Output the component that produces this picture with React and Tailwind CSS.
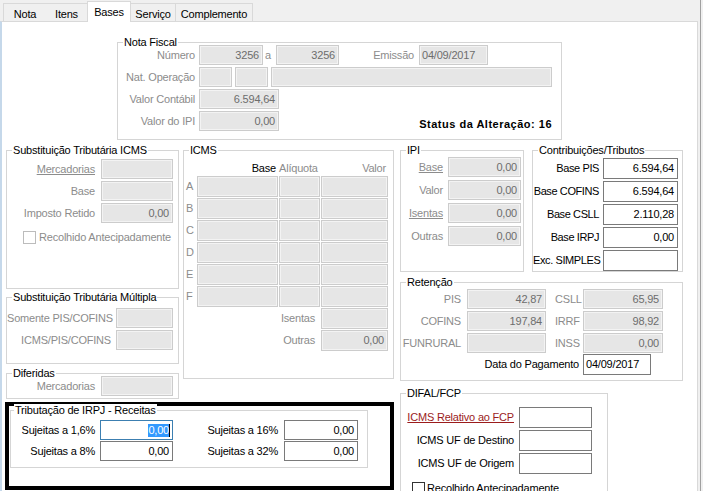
import React from "react";

const dis =
  "border border-[#cccccc] bg-[#e6e6e6] text-[#6d6d6d] shadow-[inset_0_0_0_1px_#f3f3f3]";
const en = "border border-[#7a7a7a] bg-white text-black";

function Field({ className = "", value = "", on = false, left = false }) {
  return (
    <div
      className={`${on ? en : dis} shrink-0 flex items-center whitespace-nowrap ${
        left ? "justify-start pl-[2px]" : "justify-end pr-[3px]"
      } ${className}`}
    >
      {value}
    </div>
  );
}

function Lbl({ className = "", children, dark = false, u = false }) {
  return (
    <span
      className={`shrink-0 whitespace-nowrap text-right ${
        dark ? "text-black" : "text-[#8c8c8c]"
      } ${u ? "underline" : ""} ${className}`}
    >
      {children}
    </span>
  );
}

function Group({ title, className = "", titleLeft = "left-[5px]", children }) {
  return (
    <div className={`relative shrink-0 border border-[#d5d5d5] ${className}`}>
      <span
        className={`absolute -top-[7px] ${titleLeft} bg-white px-px leading-[13px] text-black whitespace-nowrap`}
      >
        {title}
      </span>
      {children}
    </div>
  );
}

function Check({ dark = false }) {
  return (
    <span
      className={`w-[13px] h-[13px] shrink-0 bg-white border ${
        dark ? "border-[#333333]" : "border-[#bcbcbc]"
      }`}
    />
  );
}

const tabs = [
  { name: "Nota", w: "w-[43px] border-l" },
  { name: "Itens", w: "w-[41px]" },
  { name: "Bases", w: "w-[44px]", active: true },
  { name: "Serviço", w: "w-[45px] border-r" },
  { name: "Complemento", w: "w-[77px] border-r" },
];

export default function App() {
  return (
    <div className="w-[703px] h-[491px] overflow-hidden bg-white flex text-[11px] leading-[13px] tracking-[-0.2px] text-black font-['Liberation_Sans',Arial,sans-serif]">
      <div className="w-[698px] flex flex-col">
        {/* tabs */}
        <div className="h-[21px] shrink-0 bg-[#f0f0f0] flex items-end pl-[3px]">
          {tabs.map((t) =>
            t.active ? (
              <div
                key={t.name}
                className={`${t.w} relative top-px z-10 h-[21px] bg-white border-l border-r border-t border-[#d9d9d9] flex justify-center pt-[4px]`}
              >
                {t.name}
              </div>
            ) : (
              <div
                key={t.name}
                className={`${t.w} h-[18px] border-t border-[#d9d9d9] bg-[#f0f0f0] flex justify-center pt-[4px]`}
              >
                {t.name}
              </div>
            )
          )}
        </div>

        {/* panel */}
        <div className="flex-1 border-t border-t-[#d9d9d9] border-l-2 border-l-[#c5d8ea] border-r border-r-[#d9d9d9] flex flex-col">
          {/* Nota Fiscal */}
          <Group title="Nota Fiscal" className="mt-[20px] ml-[115px] w-[445px] h-[98px]">
            <div className="flex flex-col gap-[2px] pt-[2px]">
              <div className="flex items-center h-[20px]">
                <Lbl className="w-[81px] pr-[4px]">Número</Lbl>
                <Field className="w-[64px] h-full" value="3256" />
                <span className="w-[13px] pl-[2px] text-[#8c8c8c]">a</span>
                <Field className="w-[63px] h-full" value="3256" />
                <Lbl className="w-[80px] pr-[5px]">Emissão</Lbl>
                <Field className="w-[69px] h-full" value="04/09/2017" left />
              </div>
              <div className="flex items-center h-[20px]">
                <Lbl className="w-[81px] pr-[4px]">Nat. Operação</Lbl>
                <Field className="w-[33px] h-full" />
                <Field className="ml-[3px] w-[33px] h-full" />
                <Field className="ml-[3px] w-[281px] h-full" />
              </div>
              <div className="flex items-center h-[20px]">
                <Lbl className="w-[81px] pr-[4px]">Valor Contábil</Lbl>
                <Field className="w-[80px] h-full" value="6.594,64" />
              </div>
              <div className="flex items-end h-[20px]">
                <Lbl className="w-[81px] pr-[4px] self-center">Valor do IPI</Lbl>
                <Field className="w-[80px] h-full" value="0,00" />
                <span className="ml-auto mr-[9px] font-bold leading-[14px] tracking-[0.5px]">
                  Status da Alteração: 16
                </span>
              </div>
            </div>
          </Group>

          {/* body */}
          <div className="flex mt-[10px] ml-[3px] items-start">
            {/* left + middle */}
            <div className="w-[389px] shrink-0 flex flex-col">
              <div className="flex items-start">
                {/* left column */}
                <div className="ml-[1px] w-[173px] flex flex-col">
                  <Group title="Substituição Tributária ICMS" className="w-[173px] h-[139px]">
                    <div className="flex flex-col gap-[2px] pt-[8px]">
                      <div className="flex items-center h-[20px]">
                        <Lbl className="w-[94px] pr-[6px]" u>
                          Mercadorias
                        </Lbl>
                        <Field className="w-[72px] h-full" />
                      </div>
                      <div className="flex items-center h-[20px]">
                        <Lbl className="w-[94px] pr-[6px]">Base</Lbl>
                        <Field className="w-[72px] h-full" />
                      </div>
                      <div className="flex items-center h-[20px]">
                        <Lbl className="w-[94px] pr-[6px]">Imposto Retido</Lbl>
                        <Field className="w-[72px] h-full" value="0,00" />
                      </div>
                      <div className="flex items-center mt-[6px] ml-[16px]">
                        <Check />
                        <span className="ml-[3px] text-[#8c8c8c] whitespace-nowrap">
                          Recolhido Antecipadamente
                        </span>
                      </div>
                    </div>
                  </Group>

                  <Group title="Substituição Tributária Múltipla" className="mt-[8px] w-[173px] h-[67px]">
                    <div className="flex flex-col gap-[2px] pt-[10px]">
                      <div className="flex items-center h-[20px]">
                        <Lbl className="w-[109px] pr-[5px]">Somente PIS/COFINS</Lbl>
                        <Field className="w-[57px] h-full" />
                      </div>
                      <div className="flex items-center h-[20px]">
                        <Lbl className="w-[109px] pr-[5px]">ICMS/PIS/COFINS</Lbl>
                        <Field className="w-[57px] h-full" />
                      </div>
                    </div>
                  </Group>

                  <Group title="Diferidas" className="mt-[9px] w-[173px] h-[26px]">
                    <div className="flex items-center h-[20px] mt-[2px]">
                      <Lbl className="w-[94px] pr-[6px]">Mercadorias</Lbl>
                      <Field className="w-[72px] h-full" />
                    </div>
                  </Group>
                </div>

                {/* middle column */}
                <Group title="ICMS" className="ml-[4px] w-[211px] h-[229px]">
                  <div className="flex flex-col pt-[11px]">
                    <div className="flex h-[14px]">
                      <span className="w-[13px]" />
                      <span className="w-[81px] text-right pr-[2px]">Base</span>
                      <span className="ml-[1px] w-[41px] text-[#8c8c8c]">Alíquota</span>
                      <span className="ml-[1px] w-[67px] text-right pr-[2px] text-[#8c8c8c]">
                        Valor
                      </span>
                    </div>
                    <div className="flex flex-col gap-[1px]">
                      {["A", "B", "C", "D", "E", "F"].map((l) => (
                        <div key={l} className="flex items-center h-[21px]">
                          <span className="w-[13px] pl-[2px] text-[#8c8c8c]">{l}</span>
                          <Field className="w-[81px] h-full" />
                          <Field className="ml-[1px] w-[41px] h-full" />
                          <Field className="ml-[1px] w-[67px] h-full" />
                        </div>
                      ))}
                      <div className="flex items-center h-[21px]">
                        <Lbl className="w-[137px] pr-[6px]">Isentas</Lbl>
                        <Field className="w-[67px] h-full" />
                      </div>
                      <div className="flex items-center h-[21px]">
                        <Lbl className="w-[137px] pr-[6px]">Outras</Lbl>
                        <Field className="w-[67px] h-full" value="0,00" />
                      </div>
                    </div>
                  </div>
                </Group>
              </div>

              {/* IRPJ highlighted */}
              <div className="mt-[3px] w-[389px] h-[88px] border-4 border-black">
                <Group
                  title="Tributação de IRPJ - Receitas"
                  titleLeft="left-[3px]"
                  className="ml-[1px] mt-[4px] w-[358px] h-[58px]"
                >
                  <div className="flex flex-col gap-[1px] pt-[9px]">
                    <div className="flex items-center h-[20px]">
                      <Lbl className="w-[89px] pr-[5px]" dark>
                        Sujeitas a 1,6%
                      </Lbl>
                      <div className="w-[73px] h-full shrink-0 border border-[#3c7fb1] bg-white flex items-center justify-end pr-[2px]">
                        <span className="bg-[#3399ff] text-white">0,00</span>
                        <span className="w-px h-[13px] bg-black" />
                      </div>
                      <Lbl className="w-[111px] pr-[6px]" dark>
                        Sujeitas a 16%
                      </Lbl>
                      <Field className="w-[74px] h-full" value="0,00" on />
                    </div>
                    <div className="flex items-center h-[20px]">
                      <Lbl className="w-[89px] pr-[5px]" dark>
                        Sujeitas a 8%
                      </Lbl>
                      <Field className="w-[73px] h-full" value="0,00" on />
                      <Lbl className="w-[111px] pr-[6px]" dark>
                        Sujeitas a 32%
                      </Lbl>
                      <Field className="w-[74px] h-full" value="0,00" on />
                    </div>
                  </div>
                </Group>
              </div>
            </div>

            {/* right column */}
            <div className="ml-[6px] w-[283px] shrink-0 flex flex-col">
              <div className="flex items-start">
                <Group title="IPI" className="w-[124px] h-[122px]">
                  <div className="flex flex-col gap-[3px] pt-[6px]">
                    {[
                      ["Base", true],
                      ["Valor", false],
                      ["Isentas", true],
                      ["Outras", false],
                    ].map(([l, u]) => (
                      <div key={l} className="flex items-center h-[20px]">
                        <Lbl className="w-[47px] pr-[5px]" u={u}>
                          {l}
                        </Lbl>
                        <Field className="w-[73px] h-full" value="0,00" />
                      </div>
                    ))}
                  </div>
                </Group>
                <Group title="Contribuições/Tributos" className="ml-[8px] w-[151px] h-[122px]">
                  <div className="flex flex-col gap-[2px] pt-[7px]">
                    {[
                      ["Base PIS", "6.594,64"],
                      ["Base COFINS", "6.594,64"],
                      ["Base CSLL", "2.110,28"],
                      ["Base IRPJ", "0,00"],
                      ["Exc. SIMPLES", ""],
                    ].map(([l, v]) => (
                      <div key={l} className="flex items-center h-[21px]">
                        <Lbl className="w-[70px] pr-[4px] tracking-[-0.4px]" dark>
                          {l}
                        </Lbl>
                        <Field className="w-[75px] h-full" value={v} on />
                      </div>
                    ))}
                  </div>
                </Group>
              </div>

              <Group title="Retenção" className="mt-[10px] w-[283px] h-[99px]">
                <div className="flex flex-col pt-[6px]">
                  {[
                    ["PIS", "42,87", "CSLL", "65,95", ""],
                    ["COFINS", "197,84", "IRRF", "98,92", "mt-[2px]"],
                    ["FUNRURAL", "", "INSS", "0,00", "mt-[2px]"],
                  ].map(([a, av, b, bv, m]) => (
                    <div key={a} className={`flex items-center h-[20px] ${m}`}>
                      <Lbl className="w-[66px] pr-[6px]">{a}</Lbl>
                      <Field className="w-[79px] h-full" value={av} />
                      <Lbl className="w-[37px] pl-[9px] !text-left">{b}</Lbl>
                      <Field className="w-[80px] h-full" value={bv} />
                    </div>
                  ))}
                  <div className="flex items-center h-[21px] mt-[1px]">
                    <Lbl className="w-[182px] pr-[4px]" dark>
                      Data do Pagamento
                    </Lbl>
                    <Field className="w-[68px] h-full" value="04/09/2017" on left />
                  </div>
                </div>
              </Group>

              <Group title="DIFAL/FCP" className="mt-[12px] w-[208px] h-[110px]">
                <div className="flex flex-col gap-[2px] pt-[13px]">
                  <div className="flex items-center h-[21px]">
                    <Lbl className="w-[118px] pr-[5px] !text-[#9b1c1c]" u>
                      ICMS Relativo ao FCP
                    </Lbl>
                    <Field className="w-[73px] h-full" on />
                  </div>
                  <div className="flex items-center h-[21px]">
                    <Lbl className="w-[118px] pr-[5px]" dark>
                      ICMS UF de Destino
                    </Lbl>
                    <Field className="w-[73px] h-full" on />
                  </div>
                  <div className="flex items-center h-[21px]">
                    <Lbl className="w-[118px] pr-[5px]" dark>
                      ICMS UF de Origem
                    </Lbl>
                    <Field className="w-[73px] h-full" on />
                  </div>
                  <div className="flex items-center mt-[6px] ml-[11px]">
                    <Check dark />
                    <span className="ml-[2px] whitespace-nowrap">Recolhido Antecipadamente</span>
                  </div>
                </div>
              </Group>
            </div>
          </div>
        </div>
      </div>
      <div className="w-[2px] bg-[#f0f0f0]" />
      <div className="w-px bg-[#a0a0a0]" />
      <div className="w-[2px] bg-[#f0f0f0]" />
    </div>
  );
}
